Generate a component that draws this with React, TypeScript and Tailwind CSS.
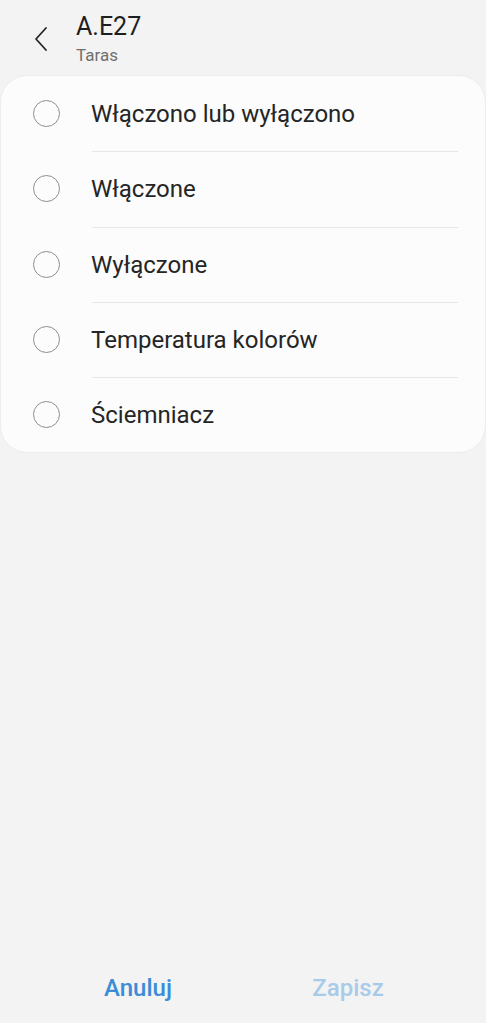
const options = [
  "Włączono lub wyłączono",
  "Włączone",
  "Wyłączone",
  "Temperatura kolorów",
  "Ściemniacz",
];

function BackIcon() {
  return (
    <svg width="16" height="26" viewBox="0 0 16 26" fill="none">
      <path
        d="M13 2 L3 13 L13 24"
        stroke="#252525"
        strokeWidth="1.8"
        strokeLinecap="round"
        strokeLinejoin="round"
      />
    </svg>
  );
}

function OptionRow({ label, first }: { label: string; first: boolean }) {
  return (
    <div className="flex h-[75.3px] items-center">
      <div className="flex w-[91px] shrink-0 justify-center">
        <span className="block h-[27px] w-[27px] rounded-full border-[1.5px] border-[#8e8e8e]" />
      </div>
      <div
        className={`flex h-full flex-1 items-center mr-[27px] ${
          first ? "" : "border-t border-[#e6e6e6]"
        }`}
      >
        <span className="-ml-[1px] text-[24px] text-[#252525]">{label}</span>
      </div>
    </div>
  );
}

export default function App() {
  return (
    <div
      className="flex h-[1023px] w-[486px] flex-col bg-[#f3f3f3]"
      style={{ fontFamily: "Roboto, 'Noto Sans', sans-serif" }}
    >
      <header className="flex h-[76px] shrink-0 items-start">
        <div className="mt-[26px] ml-[33px] flex h-[26px] w-[16px]">
          <BackIcon />
        </div>
        <div className="ml-[27px] mt-[11px] flex flex-col">
          <span className="text-[25px] leading-[32px] text-[#1e1e1e]">A.E27</span>
          <span className="mt-[2px] text-[17px] leading-[20px] text-[#6f6f6f]">Taras</span>
        </div>
      </header>

      <div className="mx-[1px] rounded-[26px] bg-[#fcfcfc] shadow-[0_0_0_1px_#ececec]">
        {options.map((label, i) => (
          <OptionRow key={label} label={label} first={i === 0} />
        ))}
      </div>

      <div className="flex-1" />

      <div className="flex h-[71px] shrink-0 items-center">
        <button className="w-[276px] text-[24px] font-medium text-[#3b8cd6]">
          Anuluj
        </button>
        <button className="w-[144px] text-[24px] font-medium text-[#a8cbea]">
          Zapisz
        </button>
      </div>
    </div>
  );
}
